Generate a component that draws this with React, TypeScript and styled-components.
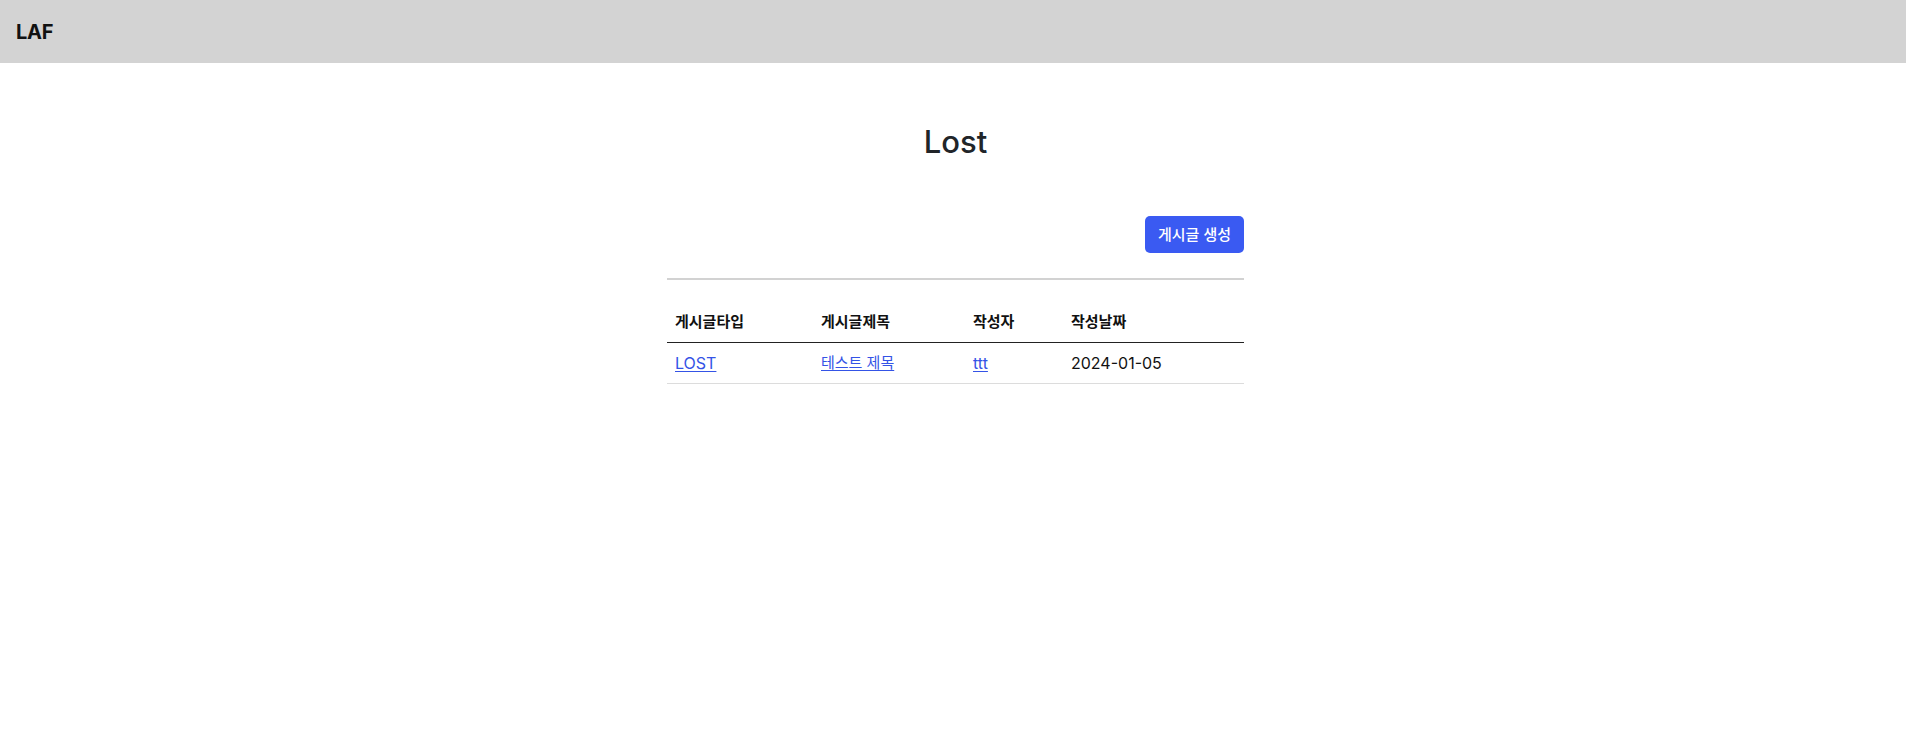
import React from 'react';
import styled, { createGlobalStyle } from 'styled-components';

const GlobalStyle = createGlobalStyle`
  html, body {
    margin: 0;
    padding: 0;
    background: #fff;
  }

  body {
    font-family: Inter, "Noto Sans CJK KR", "Noto Sans", sans-serif;
    color: #212529;
    font-size: 16px;
  }
`;

const TopBar = styled.header`
  display: flex;
  align-items: center;
  height: 63px;
  padding: 0 16px;
  background: #d3d3d3;
`;

const Brand = styled.span`
  font-size: 20px;
  font-weight: 700;
  color: #111;
  letter-spacing: -0.2px;
`;

const Main = styled.main`
  display: flex;
  flex-direction: column;
  align-items: center;
  padding: 61px 0 0 5px;
`;

const Title = styled.h1`
  margin: 0;
  font-size: 31px;
  line-height: 36px;
  font-weight: 500;
  color: #212529;
`;

const Board = styled.section`
  display: flex;
  flex-direction: column;
  width: 577px;
  margin-top: 56px;
`;

const Toolbar = styled.div`
  display: flex;
  justify-content: flex-end;
`;

const CreateButton = styled.button`
  font-family: Inter, "Noto Sans CJK KR", sans-serif;
  font-size: 15px;
  font-weight: 500;
  line-height: 23px;
  padding: 7px 13px;
  color: #fff;
  background: #3a5af2;
  border: none;
  border-radius: 5px;
  cursor: pointer;
`;

const Divider = styled.hr`
  width: 100%;
  height: 2px;
  margin: 25px 0 22px;
  border: none;
  background: #d2d2d2;
`;

const Table = styled.table`
  width: 100%;
  border-collapse: collapse;
  table-layout: fixed;
`;

const HeadCell = styled.th<{ $width: number }>`
  width: ${p => p.$width}px;
  padding: 8px;
  line-height: 24px;
  text-align: left;
  font-size: 15px;
  font-weight: 700;
  color: #111;
  border-bottom: 1px solid #222;
`;

const Cell = styled.td<{ $ko?: boolean }>`
  padding: 8px;
  line-height: 24px;
  font-size: ${p => (p.$ko ? '15px' : '16px')};
  color: #111;
  border-bottom: 1px solid #dcdcdc;
`;

const RowLink = styled.a`
  color: #3453e6;
  text-decoration: underline;
  text-underline-offset: 2px;
`;

type Post = {
  type: string;
  title: string;
  author: string;
  date: string;
};

// content widths; each cell adds 16px of padding
const columns = [
  { label: '게시글타입', width: 130 },
  { label: '게시글제목', width: 136 },
  { label: '작성자', width: 82 },
  { label: '작성날짜', width: 165 },
];

const posts: Post[] = [
  { type: 'LOST', title: '테스트 제목', author: 'ttt', date: '2024-01-05' },
];

export default function App() {
  return (
    <>
      <GlobalStyle />
      <TopBar>
        <Brand>LAF</Brand>
      </TopBar>
      <Main>
        <Title>Lost</Title>
        <Board>
          <Toolbar>
            <CreateButton>게시글 생성</CreateButton>
          </Toolbar>
          <Divider />
          <Table>
            <thead>
              <tr>
                {columns.map(c => (
                  <HeadCell key={c.label} $width={c.width}>
                    {c.label}
                  </HeadCell>
                ))}
              </tr>
            </thead>
            <tbody>
              {posts.map(p => (
                <tr key={p.title}>
                  <Cell>
                    <RowLink href="#">{p.type}</RowLink>
                  </Cell>
                  <Cell $ko>
                    <RowLink href="#">{p.title}</RowLink>
                  </Cell>
                  <Cell>
                    <RowLink href="#">{p.author}</RowLink>
                  </Cell>
                  <Cell>{p.date}</Cell>
                </tr>
              ))}
            </tbody>
          </Table>
        </Board>
      </Main>
    </>
  );
}
